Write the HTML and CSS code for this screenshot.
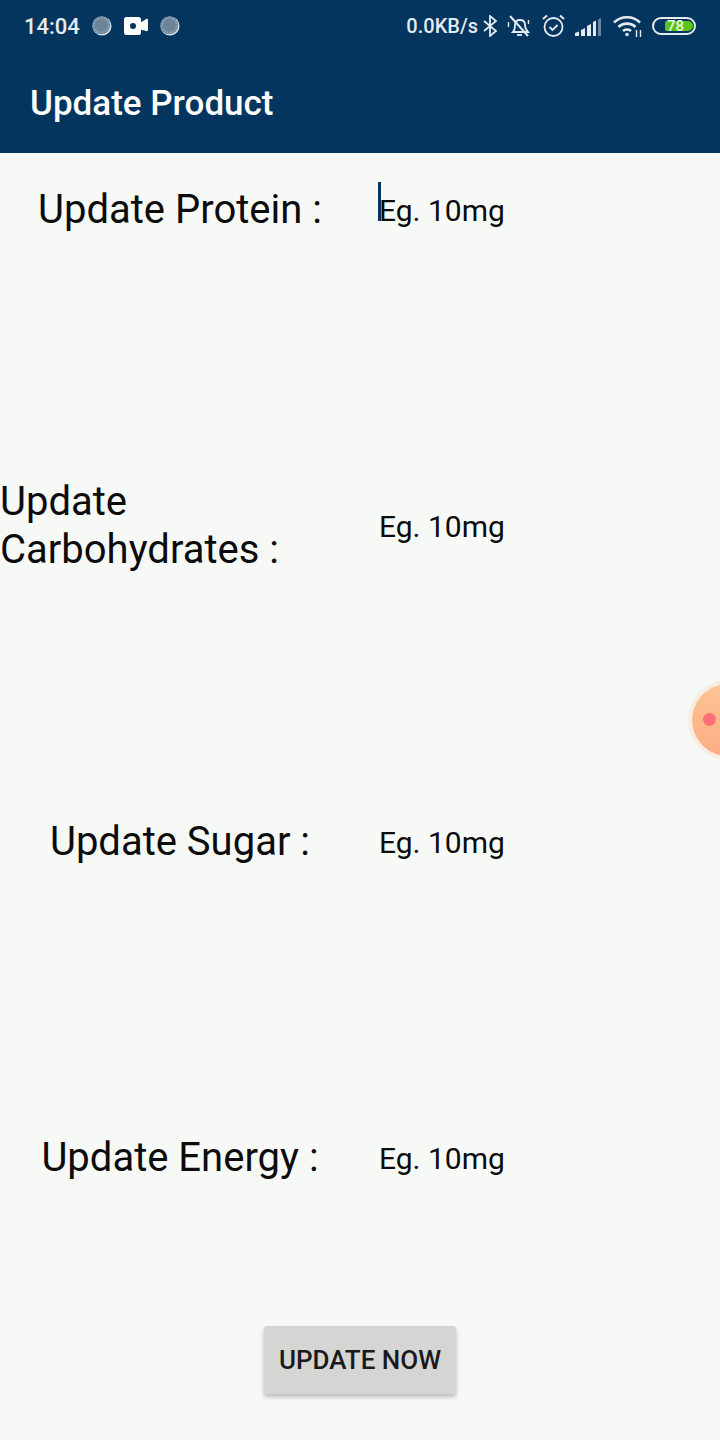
FILE: index.html
```html
<!DOCTYPE html>
<html>
<head>
  <title>Update Product</title>
  <link rel="stylesheet" href="styles.css">
</head>
<body>

<div class="header">
  <div class="status">
    <div class="status-left">
      <span class="time">14:04</span>
      <svg class="ic-dot" width="20" height="20" viewBox="0 0 20 20"><circle cx="10" cy="10" r="9.5" fill="#dfe8ee"/><circle cx="9.3" cy="9.3" r="9" fill="#6b8499"/><circle cx="9.3" cy="9.3" r="7.4" fill="none" stroke="#94a8b8" stroke-width="2.4" stroke-dasharray="1 1.2"/></svg>
      <svg class="ic-cam" width="24" height="18" viewBox="0 0 24 18"><path d="M2.5 0h12A2.5 2.5 0 0 1 17 2.5v2.7l5.2-3.2c.8-.4 1.8 0 1.8 1v10c0 1-1 1.500-1.800 1L17 12.800v2.700a2.500 2.500 0 0 1-2.500 2.500h-12A2.500 2.500 0 0 1 0 15.500v-13A2.500 2.500 0 0 1 2.500 0z" fill="#fff"/><circle cx="9" cy="9" r="3" fill="#03355e"/></svg>
      <svg class="ic-dot ic-dot-last" width="20" height="20" viewBox="0 0 20 20"><circle cx="10" cy="10" r="9.5" fill="#dfe8ee"/><circle cx="9.3" cy="9.3" r="9" fill="#6b8499"/><circle cx="9.3" cy="9.3" r="7.400" fill="none" stroke="#94a8b8" stroke-width="2.400" stroke-dasharray="1 1.200"/></svg>
    </div>
    <div class="status-right">
      <span class="speed">0.0KB/s</span>
      <svg class="ic-bt" width="15" height="22" viewBox="0 0 15 22" fill="none" stroke="#e4ebf0" stroke-width="1.800"><path d="M1 6l12 10-6 5V1l6 5L1 16"/></svg>
      <svg class="ic-bell" width="24" height="24" viewBox="0 0 24 24" fill="none" stroke="#e4ebf0" stroke-width="1.800"><path d="M6 18c2-2 2-4 2-7 0-3 2-5 5-5s5 2 5 5c0 3 1 5 3 7z"/><path d="M10 21h5"/><path d="M3 2l18 20" stroke-width="2"/><path d="M1.500 8v5M21.500 6v4" stroke-width="1.400"/></svg>
      <svg class="ic-alarm" width="23" height="24" viewBox="0 0 23 24" fill="none" stroke="#e4ebf0" stroke-width="1.800"><circle cx="11.500" cy="13" r="9"/><path d="M7.500 13l3 3 5-5"/><path d="M1 5l4-3.500M22 5l-4-3.500" stroke-width="2"/></svg>
      <svg class="ic-signal" width="27" height="20" viewBox="0 0 27 20"><path d="M0 20v-3l4-1.500V20zM6 20v-6l4-2v8zM12 20V10l4-2v12zM18 20V6l3-1.500V20z" fill="#e4ebf0"/><path d="M23 20V3.500l3-1.500v18z" fill="#6b8499"/></svg>
      <svg class="ic-wifi" width="30" height="22" viewBox="0 0 30 22" fill="none" stroke="#e4ebf0" stroke-width="2.600"><path d="M1 7.500c7-7 19-7 26 0M5.500 12c4.500-4.500 12.500-4.500 17 0M10 16c2-2 6-2 8 0"/><circle cx="14" cy="19.500" r="1.800" fill="#e4ebf0" stroke="none"/><path d="M23.500 15v7M27.500 15v7" stroke-width="1.400"/></svg>
      <div class="battery"><div class="battery-fill" style="width: 78%"></div><span class="battery-num">78</span></div>
    </div>
  </div>
  <div class="title">Update Product</div>
</div>

<form class="form">
  <div class="row">
    <div class="label">Update Protein :</div>
    <div class="field"><span class="caret"></span>Eg. 10mg</div>
  </div>
  <div class="row">
    <div class="label label-wrap">Update Carbohydrates :</div>
    <div class="field">Eg. 10mg</div>
  </div>
  <div class="row">
    <div class="label">Update Sugar :</div>
    <div class="field">Eg. 10mg</div>
  </div>
  <div class="row">
    <div class="label">Update Energy :</div>
    <div class="field">Eg. 10mg</div>
  </div>
  <button type="button" class="btn">UPDATE NOW</button>
</form>

<div class="bubble"><span class="bubble-dot"></span></div>

</body>
</html>
```

FILE: styles.css
```css
html, body {
  margin: 0;
  height: 1440px;
  overflow: hidden;
}
body {
  font-family: Roboto, sans-serif;
  background-color: #f7f9f7;
  color: #0c0c0c;
  position: relative;
}
.header {
  background-color: #03355e;
  height: 153px;
  color: white;
}
.status {
  height: 52px;
  display: flex;
  justify-content: space-between;
  align-items: center;
  padding: 0 24px;
}
.status-left, .status-right {
  display: flex;
  align-items: center;
}
.time {
  font-size: 22px;
  font-weight: 500;
  color: #e4ebf0;
  margin-right: 12px;
}
.ic-cam {
  margin: 0 12px;
}
.speed {
  font-size: 20px;
  font-weight: 500;
  color: #e4ebf0;
  margin-right: 5px;
}
.ic-bt { margin-right: 9px; }
.ic-bell { margin-right: 11px; }
.ic-alarm { margin-right: 10px; }
.ic-signal { margin-right: 11px; }
.ic-wifi { margin-right: 9px; }
.battery {
  position: relative;
  width: 44px;
  height: 18px;
  border: 2px solid #e4ebf0;
  border-radius: 9px;
  box-sizing: border-box;
  padding: 2px;
}
.battery-fill {
  height: 100%;
  background-color: #5cc31a;
  border-radius: 2px 6px 6px 2px;
  margin-left: 9px;
}
.battery-num {
  position: absolute;
  left: 13px;
  top: -2px;
  font-size: 15px;
  line-height: 18px;
  font-weight: 500;
  color: #e8f5dc;
}
.title {
  font-size: 35px;
  font-weight: 500;
  padding: 29px 30px 0;
  line-height: 46px;
}
.form {
  display: flex;
  flex-direction: column;
  gap: 202px;
}
.row {
  display: flex;
  align-items: center;
  height: 114px;
}
.label {
  width: 360px;
  text-align: center;
  font-size: 40px;
  line-height: 48px;
  flex-shrink: 0;
}
.label-wrap {
  width: 300px;
  margin-right: 60px;
  text-align: left;
}
.field {
  position: relative;
  margin-left: 19px;
  font-size: 30px;
}
.caret {
  position: absolute;
  left: -1px;
  top: -11px;
  width: 3px;
  height: 39px;
  background-color: #03355e;
}
.btn {
  position: absolute;
  left: 264px;
  top: 1326px;
  width: 192px;
  height: 68px;
  border: none;
  border-radius: 3px;
  background-color: #d5d6d4;
  color: #1a1a1a;
  font-family: Roboto, sans-serif;
  font-size: 26px;
  font-weight: 500;
  padding: 0;
  box-shadow: 0 3px 4px rgba(0, 0, 0, 0.25);
}
.bubble {
  position: absolute;
  left: 692px;
  top: 684px;
  width: 72px;
  height: 72px;
  border-radius: 50%;
  background: linear-gradient(#fdc593, #fdac82);
  box-shadow: 0 0 0 4px rgba(250, 220, 200, 0.45);
}
.bubble-dot {
  position: absolute;
  left: 11px;
  top: 29px;
  width: 13px;
  height: 13px;
  border-radius: 50%;
  background-color: #fb6f78;
}
```
